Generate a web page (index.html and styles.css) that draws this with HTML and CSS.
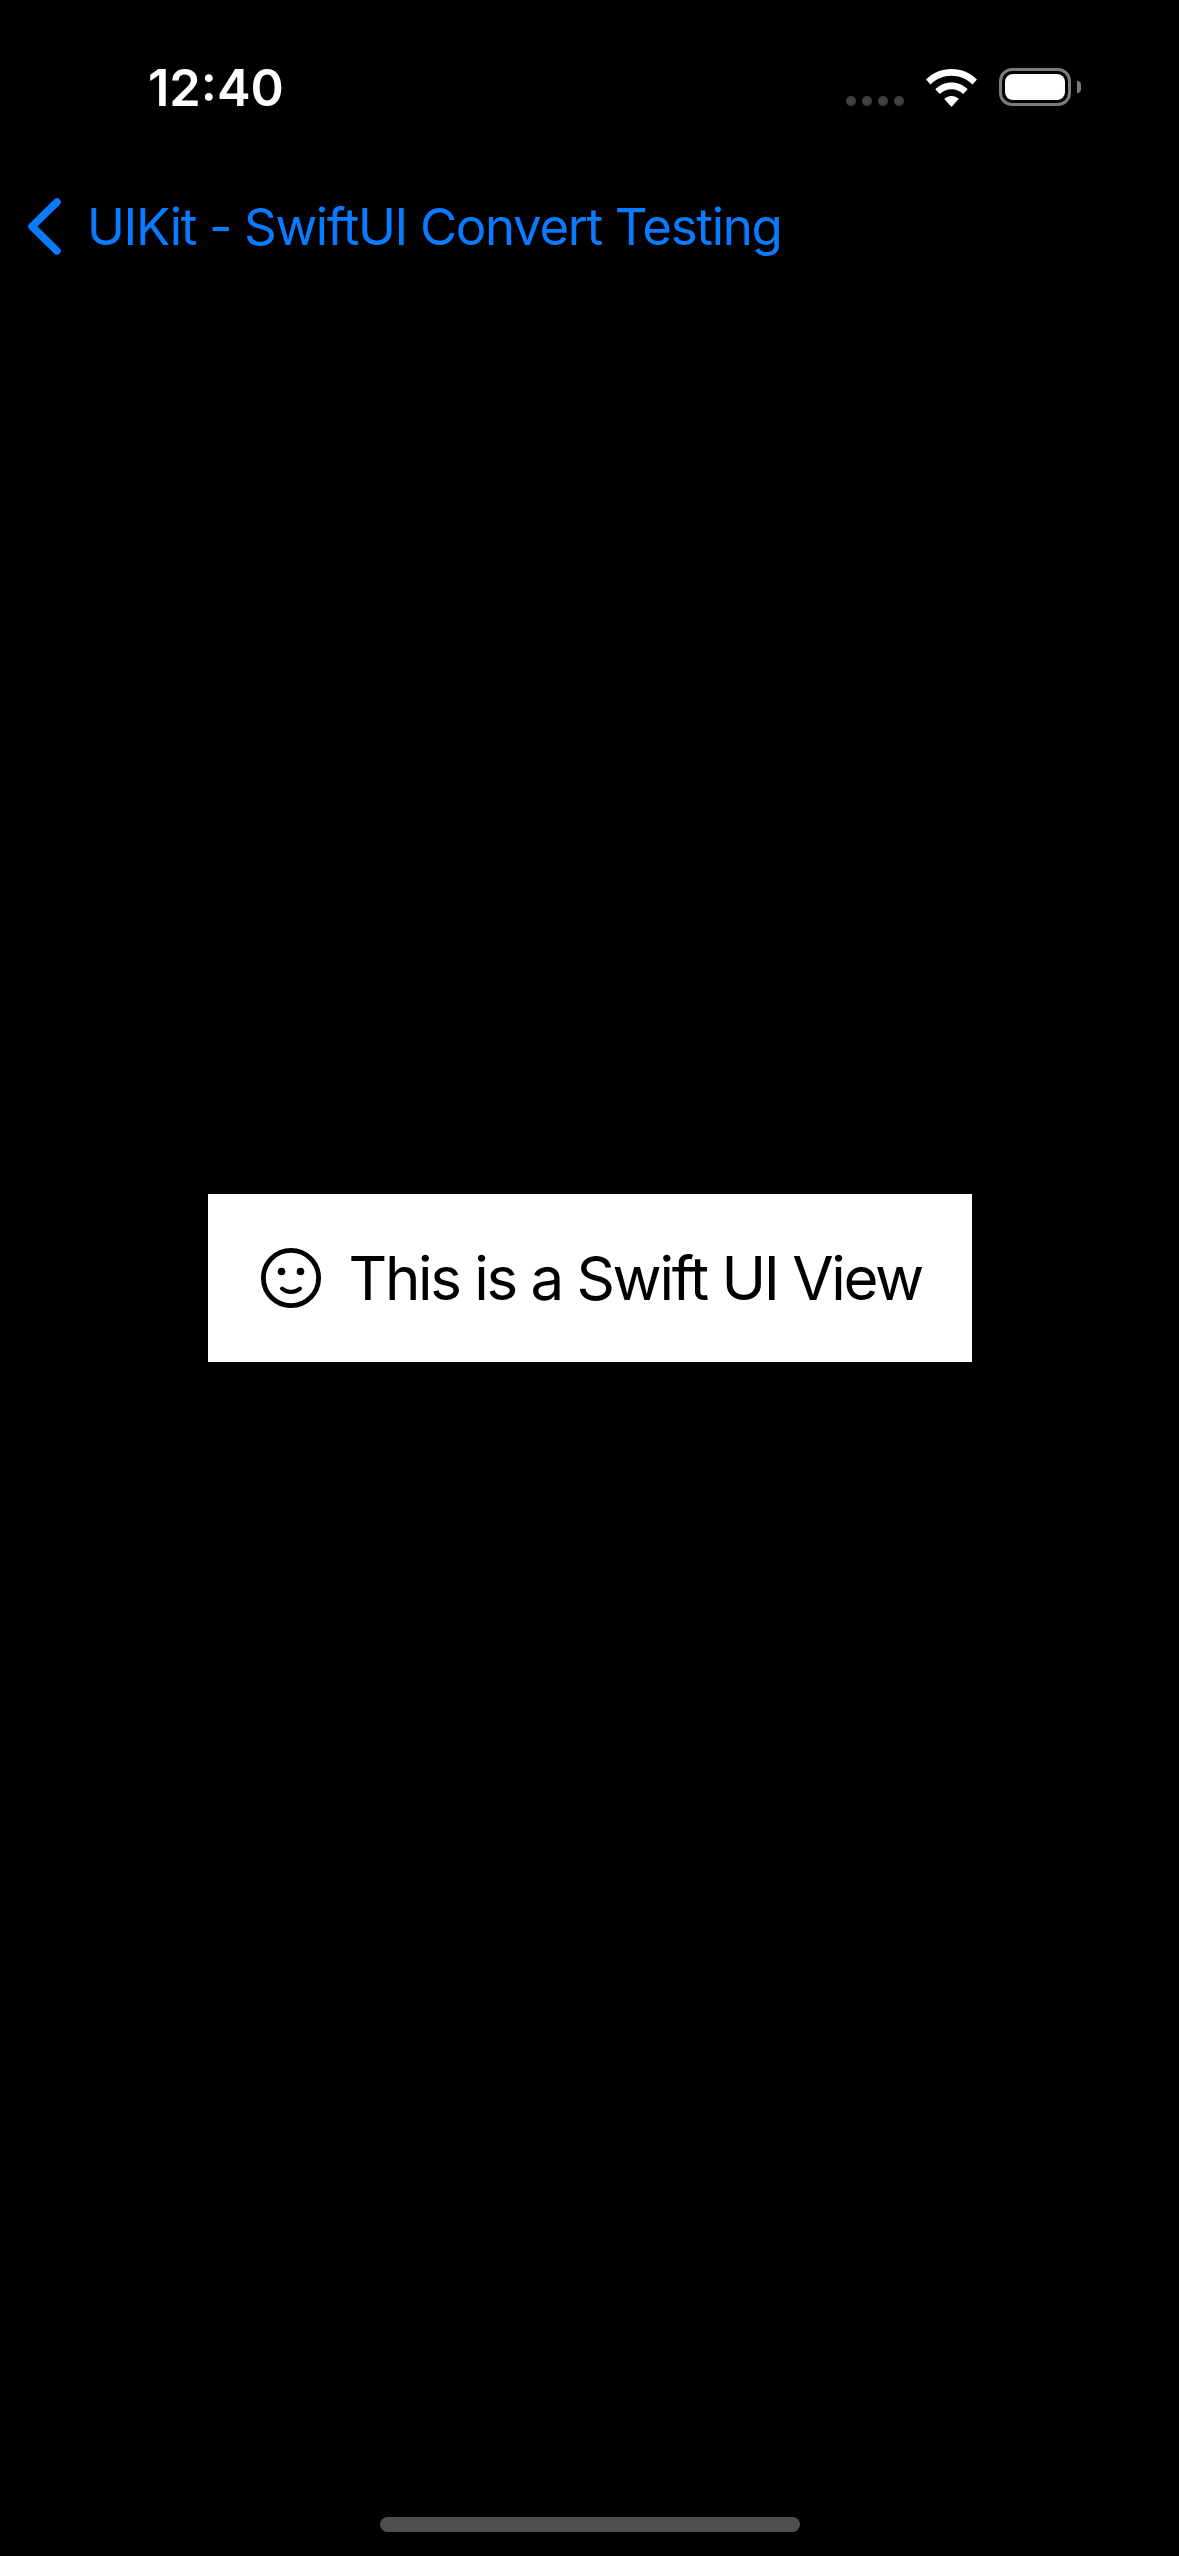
FILE: index.html
```html
<!DOCTYPE html>
<html lang="en">

<head>
 <meta charset="UTF-8">
 <meta name="viewport" content="width=device-width, initial-scale=1.0">
 <title>UIKit - SwiftUI Convert Testing</title>
 <link rel="stylesheet" href="styles.css">
</head>

<body>
 <header class="top">
  <div class="status">
   <span class="time">12:40</span>
   <div class="status-icons">
    <div class="dots"><i></i><i></i><i></i><i></i></div>
    <svg class="wifi" width="51" height="38" viewBox="0 0 51 38">
     <path d="M25.500 0C35.500 0 44.500 4 51 10.500L46.500 15.500C40.800 10 33.500 6.800 25.500 6.800S10.200 10 4.500 15.500L0 10.500C6.500 4 15.500 0 25.500 0Z" fill="#fff"/>
     <path d="M25.500 13.500C31.800 13.500 37.500 16 41.700 20.200L37.200 25.100C34.100 22.100 30 20.300 25.500 20.300S16.900 22.100 13.800 25.100L9.300 20.200C13.500 16 19.200 13.500 25.500 13.500Z" fill="#fff"/>
     <path d="M25.500 27C28.300 27 30.800 28.100 32.700 29.900L25.500 38L18.300 29.900C20.200 28.100 22.700 27 25.500 27Z" fill="#fff"/>
    </svg>
    <div class="battery">
     <div class="battery-level"></div>
    </div>
    <div class="battery-nub"></div>
   </div>
  </div>
  <nav class="nav">
   <svg class="chevron" width="33" height="57" viewBox="0 0 33 57">
    <path d="M29 4L4 28.500L29 53" fill="none" stroke="#0a7aff" stroke-width="7.500" stroke-linecap="round" stroke-linejoin="round"/>
   </svg>
   <span class="nav-title">UIKit - SwiftUI Convert Testing</span>
  </nav>
 </header>

 <main class="card">
  <svg class="smiley" width="60" height="60" viewBox="0 0 60 60">
   <circle cx="30" cy="30" r="27.600" fill="none" stroke="#000" stroke-width="4.800"/>
   <circle cx="20.500" cy="23.500" r="3.800" fill="#000"/>
   <circle cx="39.500" cy="23.500" r="3.800" fill="#000"/>
   <path d="M21 40.500C26 45 34 45 39 40.500" fill="none" stroke="#000" stroke-width="4" stroke-linecap="round"/>
  </svg>
  <span class="card-text">This is a Swift UI View</span>
 </main>

 <footer class="bottom">
  <div class="home-bar"></div>
 </footer>
</body>

</html>
```

FILE: styles.css
```css
html,
body {
 margin: 0;
 height: 100%;
}

body {
 height: 2556px;
 display: grid;
 grid-template-rows: 1fr 168px 1fr;
 justify-items: center;
 background-color: #000;
 font-family: Inter, "Liberation Sans", sans-serif;
}

.top {
 width: 100%;
}

.status {
 display: flex;
 justify-content: space-between;
 padding: 60px 98px 0 148px;
}

.time {
 color: #fff;
 font-size: 50.500px;
 font-weight: 600;
 line-height: 56px;
}

.status-icons {
 display: flex;
 align-items: flex-start;
 padding-top: 8px;
}

.dots {
 display: flex;
 gap: 6px;
 margin: 28px 22px 0 0;
}

.dots i {
 width: 10px;
 height: 10px;
 border-radius: 50%;
 background-color: #404040;
}

.wifi {
 margin: 1px 22px 0 0;
}

.battery {
 box-sizing: border-box;
 width: 72px;
 height: 38px;
 padding: 3px;
 border: 3px solid #7b7b7b;
 border-radius: 13px;
}

.battery-level {
 height: 100%;
 background-color: #fff;
 border-radius: 8px;
}

.battery-nub {
 width: 4px;
 height: 12px;
 margin: 13px 0 0 6px;
 background-color: #7b7b7b;
 border-radius: 0 8px 8px 0;
}

.nav {
 display: flex;
 align-items: center;
 gap: 26px;
 padding: 82px 0 0 28px;
}

.nav-title {
 color: #0a7aff;
 font-size: 51px;
 line-height: 57px;
 letter-spacing: -1.350px;
}

.card {
 display: flex;
 align-items: center;
 gap: 28px;
 box-sizing: border-box;
 width: 764px;
 padding: 0 50px 0 53px;
 background-color: #fff;
}

.smiley {
 flex-shrink: 0;
}

.card-text {
 color: #000;
 font-size: 60px;
 letter-spacing: -2.300px;
 white-space: nowrap;
}

.bottom {
 align-self: end;
 padding-bottom: 24px;
}

.home-bar {
 width: 420px;
 height: 15px;
 background-color: #4f4f4f;
 border-radius: 8px;
}
```
